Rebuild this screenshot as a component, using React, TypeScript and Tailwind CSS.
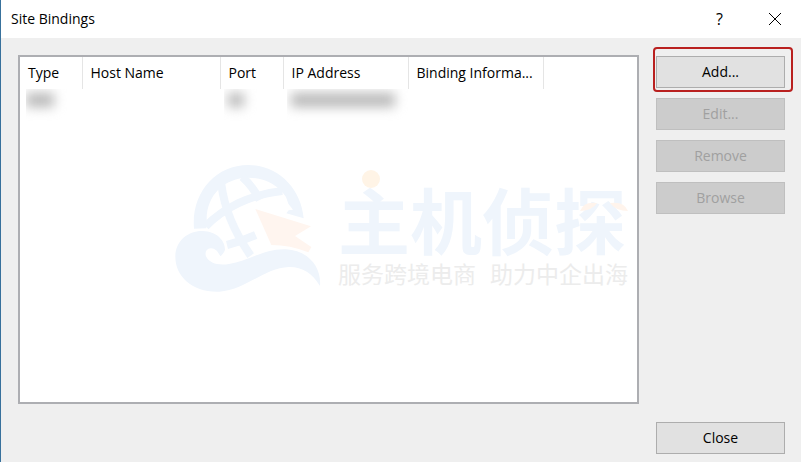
import React from 'react';

const columns = [
  { label: 'Type', width: 'w-[62px]' },
  { label: 'Host Name', width: 'w-[138px]' },
  { label: 'Port', width: 'w-[63px]' },
  { label: 'IP Address', width: 'w-[125px]' },
  { label: 'Binding Informa...', width: 'w-[135px]' },
];

const actions = [
  { label: 'Add...', disabled: false },
  { label: 'Edit...', disabled: true },
  { label: 'Remove', disabled: true },
  { label: 'Browse', disabled: true },
];

type DialogButtonProps = {
  label: string;
  disabled?: boolean;
};

const DialogButton: React.FC<DialogButtonProps> = ({ label, disabled }) => (
  <button
    type="button"
    disabled={disabled}
    className="h-8 w-full border border-[#adadad] bg-[#e1e1e1] text-sm text-black disabled:border-[#bfbfbf] disabled:bg-[#cccccc] disabled:text-[#a0a0a0]"
  >
    {label}
  </button>
);

const GlobeLogo: React.FC = () => (
  <svg viewBox="30 30 441 384" className="h-32 w-[147px] shrink-0" aria-hidden="true">
    <path
      fill="#eff5fc"
      d="M87 221C78 115 150 30 250 30C338 30 408 99 416 190L364 175L371 166L384 164L370 146L363 126C340 89 297 68 250 68C178 68 124 122 125 194L124 220Z"
    />
    <g fill="none" stroke="#eff5fc" strokeWidth="24">
      <path d="M122 214C175 160 255 118 352 108" />
      <path d="M169 88C178 160 208 232 257 302" />
      <path d="M232 66C252 84 270 107 284 135" />
      <path d="M186 270Q230 259 272 240" />
    </g>
    <path fill="#fff5ef" d="M271 162L438 214L390 243L439 276L430 292Q375 270 319 270Z" />
    <path
      fill="#eff5fc"
      d="M31 305C31 258 69 227 113 228C154 229 181 256 180 285C176 294 172 299 166 304C158 288 149 279 137 280C124 281 119 292 123 304C133 326 161 332 192 327C250 318 300 280 363 283C426 286 470 332 465 393C443 355 410 335 372 336C298 338 241 406 163 410C83 413 31 365 31 305Z"
    />
  </svg>
);

const Watermark: React.FC = () => (
  <div className="pointer-events-none absolute left-[155px] top-[108px] flex select-none gap-4 font-['Liberation_Sans','Noto_Sans_CJK_SC',sans-serif]">
    <GlobeLogo />
    <div className="relative flex w-[290px] flex-col pt-6">
      <svg viewBox="0 0 290 60" className="absolute left-0 top-0 h-[60px] w-[290px]" aria-hidden="true">
        <circle cx="33" cy="14" r="9" fill="#fff4e6" />
      </svg>
      <span className="whitespace-nowrap text-[72px] font-bold leading-[70px] text-[#eff5fc]">
        主机侦探
      </span>
      <svg viewBox="0 0 290 60" className="absolute left-0 top-0 h-[60px] w-[290px]" aria-hidden="true">
        <path fill="#fff4ec" d="M242 46Q246 36 259 38Q255 45 242 46ZM272 38Q286 36 290 46Q278 46 272 38Z" />
      </svg>
      <span className="flex justify-between whitespace-nowrap text-[23px] leading-8 text-[#ececec]">
        <span>服务跨境电商</span>
        <span>助力中企出海</span>
      </span>
    </div>
  </div>
);

const Redacted: React.FC<{ width: string }> = ({ width }) => (
  <div className="h-8 overflow-hidden pt-1">
    <div className={`h-[14px] bg-[#b8b8b8] blur-[6px] ${width}`} />
  </div>
);

const BindingsList: React.FC = () => (
  <div className="relative flex-1 overflow-hidden border-2 border-[#adaeb2] bg-white">
    <table className="w-full table-fixed border-collapse text-sm">
      <thead>
        <tr>
          {columns.map((column) => (
            <th
              key={column.label}
              className={`h-8 whitespace-nowrap border-r border-[#e5e5e5] px-2 text-left font-normal ${column.width}`}
            >
              {column.label}
            </th>
          ))}
          <td />
        </tr>
      </thead>
      <tbody>
        <tr>
          <td className="pl-[6px]"><Redacted width="w-7" /></td>
          <td />
          <td className="pl-1"><Redacted width="ml-1 w-4" /></td>
          <td className="pl-1"><Redacted width="ml-1 w-[104px]" /></td>
          <td />
          <td />
        </tr>
      </tbody>
    </table>
    <Watermark />
  </div>
);

const TitleBar: React.FC = () => (
  <header className="flex h-[38px] items-center justify-between bg-white pl-[10px] pr-5">
    <h1 className="text-sm">Site Bindings</h1>
    <div className="flex items-center gap-[46px]">
      <button type="button" aria-label="Help" className="text-base">?</button>
      <button type="button" aria-label="Close window">
        <svg viewBox="0 0 12 12" className="size-3" fill="none" stroke="black" aria-hidden="true">
          <path d="M0 0L12 12M12 0L0 12" />
        </svg>
      </button>
    </div>
  </header>
);

export default function App() {
  return (
    <div className="flex min-h-screen flex-col border-l border-[#38719c] bg-[#efefef] font-['Open_Sans',sans-serif] text-black">
      <TitleBar />
      <main className="flex flex-1 gap-[17px] pb-2 pl-[17px] pr-4 pt-[17px]">
        <div className="flex flex-1 flex-col pb-[50px]">
          <BindingsList />
        </div>
        <div className="flex w-[129px] flex-col justify-between">
          <div className="flex flex-col gap-[10px] pt-px">
            {actions.map((action) => (
              <div key={action.label} className="relative">
                <DialogButton label={action.label} disabled={action.disabled} />
                {action.label === 'Add...' && (
                  <div className="pointer-events-none absolute -bottom-1 -left-[3px] -right-2 -top-[9px] rounded border-2 border-[#b9201f]" />
                )}
              </div>
            ))}
          </div>
          <DialogButton label="Close" />
        </div>
      </main>
    </div>
  );
}
